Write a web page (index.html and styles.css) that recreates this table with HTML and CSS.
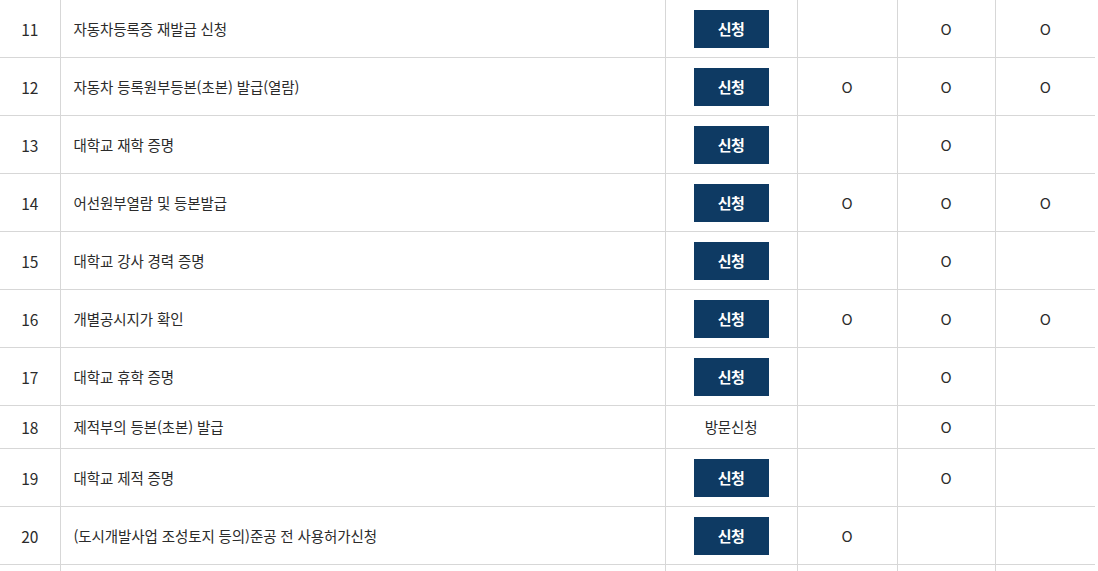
FILE: index.html
```html
<!DOCTYPE html>
<html lang="ko">
<head>
<meta charset="utf-8">
<link rel="stylesheet" href="styles.css">
</head>
<body>
<table class="list">
  <colgroup>
    <col class="c-no"><col class="c-name"><col class="c-btn"><col class="c-o"><col class="c-o2"><col class="c-o3">
  </colgroup>
  <tbody>
    <tr><td class="no">11</td><td class="name">자동차등록증 재발급 신청</td><td class="act"><a class="btn">신청</a></td><td></td><td>O</td><td>O</td></tr>
    <tr><td class="no">12</td><td class="name">자동차 등록원부등본(초본) 발급(열람)</td><td class="act"><a class="btn">신청</a></td><td>O</td><td>O</td><td>O</td></tr>
    <tr><td class="no">13</td><td class="name">대학교 재학 증명</td><td class="act"><a class="btn">신청</a></td><td></td><td>O</td><td></td></tr>
    <tr><td class="no">14</td><td class="name">어선원부열람 및 등본발급</td><td class="act"><a class="btn">신청</a></td><td>O</td><td>O</td><td>O</td></tr>
    <tr><td class="no">15</td><td class="name">대학교 강사 경력 증명</td><td class="act"><a class="btn">신청</a></td><td></td><td>O</td><td></td></tr>
    <tr><td class="no">16</td><td class="name">개별공시지가 확인</td><td class="act"><a class="btn">신청</a></td><td>O</td><td>O</td><td>O</td></tr>
    <tr><td class="no">17</td><td class="name">대학교 휴학 증명</td><td class="act"><a class="btn">신청</a></td><td></td><td>O</td><td></td></tr>
    <tr class="short"><td class="no">18</td><td class="name">제적부의 등본(초본) 발급</td><td class="act">방문신청</td><td></td><td>O</td><td></td></tr>
    <tr><td class="no">19</td><td class="name">대학교 제적 증명</td><td class="act"><a class="btn">신청</a></td><td></td><td>O</td><td></td></tr>
    <tr><td class="no">20</td><td class="name">(도시개발사업 조성토지 등의)준공 전 사용허가신청</td><td class="act"><a class="btn">신청</a></td><td>O</td><td></td><td></td></tr>
    <tr class="tail"><td class="no"></td><td class="name"></td><td class="act"></td><td></td><td></td><td></td></tr>
  </tbody>
</table>
</body>
</html>
```
FILE: styles.css
```css
html, body {
  margin: 0;
  padding: 0;
  background: #ffffff;
}
body {
  font-family: "Noto Sans CJK KR", "Noto Sans", sans-serif;
  color: #2b2b2b;
  font-size: 15px;
  overflow: hidden;
}
.list {
  width: 1095px;
  border-collapse: collapse;
  table-layout: fixed;
}
.c-no { width: 60px; }
.c-name { width: 605px; }
.c-btn { width: 132px; }
.c-o { width: 100px; }
.c-o2 { width: 98px; }
.c-o3 { width: 100px; }
.list td {
  height: 57px;
  padding: 0;
  border-bottom: 1px solid #d7d7d7;
  border-left: 1px solid #d7d7d7;
  text-align: center;
  vertical-align: middle;
  line-height: 20px;
}
.list td:first-child { border-left: none; }
.list td:last-child { border-right: none; }
.list td.no { font-size: 15.5px; }
.list tr.short td { height: 42px; }
.list tr.tail td { height: 20px; border-bottom: none; }
.list td.name {
  text-align: left;
  padding-left: 13px;
  letter-spacing: -0.1px;
  font-size: 14.5px;
}
.list td.act {
  font-size: 14.5px;
  letter-spacing: -0.2px;
}
.btn {
  display: inline-flex;
  align-items: center;
  justify-content: center;
  width: 75px;
  height: 38px;
  background: #0e3a63;
  color: #ffffff;
  font-weight: 700;
  font-size: 15px;
  letter-spacing: -0.5px;
  vertical-align: middle;
}
```
